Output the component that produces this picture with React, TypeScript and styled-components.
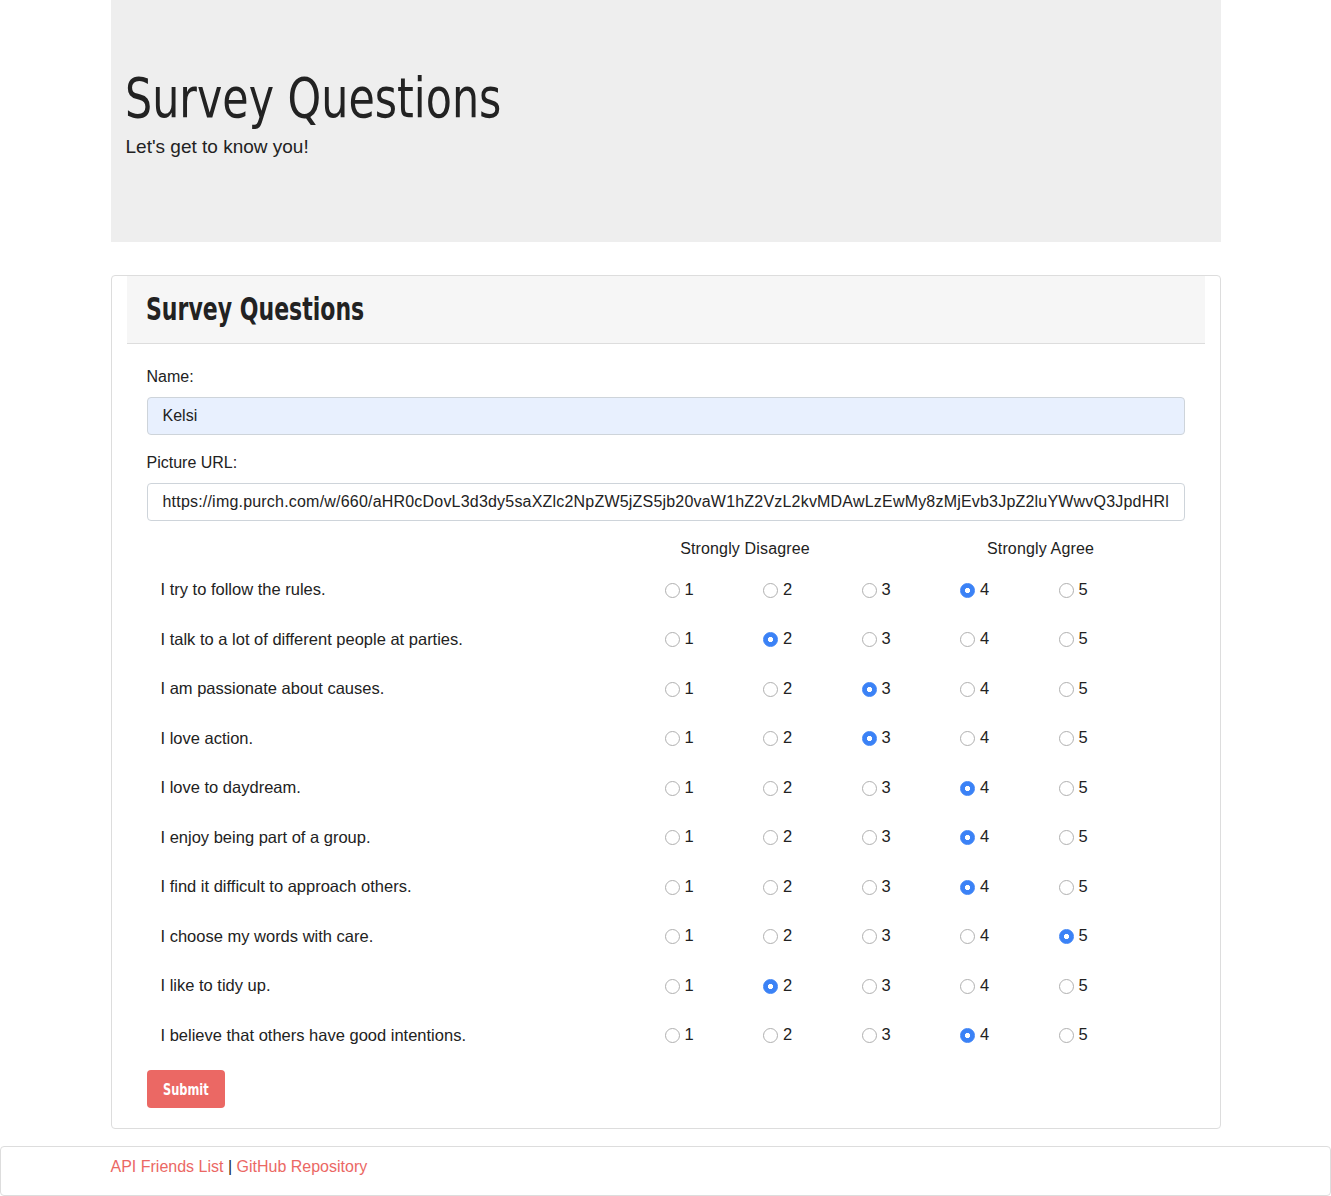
import styled, { createGlobalStyle } from 'styled-components';

const headFont = '"DejaVu Sans Condensed", "Liberation Sans", sans-serif';
const bodyFont = '"Liberation Sans", Arial, sans-serif';
const primary = '#eb6864';

const GlobalStyle = createGlobalStyle`
  * { box-sizing: border-box; }
  body {
    margin: 0;
    background: #fff;
    color: #222;
    font-family: ${bodyFont};
    font-size: 16px;
    line-height: 1.5;
  }
`;

const Container = styled.div`
  width: 1110px;
  margin: 0 auto;
`;

const Jumbotron = styled.header`
  height: 242px;
  background-color: #eeeeee;
  padding: 64px 14px 0;
`;

/* the theme uses a narrow heading face; squeeze the condensed one to fit */
const Narrow = styled.span<{ $scale: number; $origin?: string }>`
  display: inline-block;
  transform: scaleX(${({ $scale }) => $scale});
  transform-origin: ${({ $origin }) => $origin || 'left'} center;
  white-space: nowrap;
`;

const Display = styled.h1`
  margin: 0;
  font-family: ${headFont};
  font-size: 56px;
  font-weight: 400;
  line-height: 1.2;
  color: #222;
`;

const Lead = styled.p`
  margin: 2px 0 0 1px;
  font-size: 19px;
  font-weight: 300;
  line-height: 28px;
`;

const Card = styled.section`
  margin-top: 33px;
  border: 1px solid #dddddd;
  border-radius: 4px;
  padding: 0 15px 20px;
`;

const CardHeader = styled.div`
  background-color: #f6f6f6;
  border-bottom: 1px solid #dddddd;
  padding: 12px 19px 13px;
`;

const CardTitle = styled.h2`
  margin: 0;
  font-family: ${headFont};
  font-size: 32px;
  font-weight: 700;
  line-height: 42px;
  color: #222;
`;

const CardBody = styled.div`
  padding: 21px 20px 0;
`;

const Label = styled.label`
  display: block;
  margin-bottom: 8px;
`;

const Field = styled.input<{ $filled?: boolean }>`
  display: block;
  width: 100%;
  height: 38px;
  padding: 6px 15px;
  margin-bottom: 16px;
  border: 1px solid #ced4da;
  border-radius: 4px;
  background-color: ${({ $filled }) => ($filled ? '#e8f0fe' : '#fff')};
  color: #222;
  font-family: ${bodyFont};
  font-size: 16px;
  letter-spacing: ${({ $filled }) => ($filled ? '0' : '0.2px')};
  outline: none;
`;

const Grid = styled.div`
  display: grid;
  grid-template-columns: 510px repeat(5, 98.5px) 1fr;
  margin-top: 16px;
`;

const ScaleHead = styled.div<{ $col: number }>`
  grid-column: ${({ $col }) => $col} / span 2;
  height: 28px;
  line-height: 24px;
  text-align: center;
  padding-right: 20px;
  letter-spacing: 0.15px;
`;

const Question = styled.div`
  grid-column: 1;
  height: 49.5px;
  display: flex;
  align-items: center;
  padding-left: 14px;
  font-size: 16.5px;
`;

const Choice = styled.label`
  height: 49.5px;
  display: flex;
  align-items: center;
  padding-left: 8px;
  padding-bottom: 1px;
  font-size: 16.5px;
`;

const Radio = styled.input`
  appearance: none;
  flex: none;
  width: 15px;
  height: 15px;
  margin: 2px 5px 0 0;
  border: 1px solid #b0b0b0;
  border-radius: 50%;
  background: #fff;

  &:checked {
    border-color: #3b82f6;
    background: radial-gradient(circle, #fff 0 2.3px, #3b82f6 2.9px);
  }
`;

const Filler = styled.div`
  grid-column: 7;
`;

const SubmitButton = styled.button`
  display: flex;
  align-items: center;
  justify-content: center;
  width: 78px;
  margin-top: 10px;
  height: 38px;
  padding: 0;
  border: none;
  border-radius: 4px;
  background-color: ${primary};
  color: #fff;
  font-family: ${headFont};
  font-size: 16px;
  font-weight: 700;
`;

const Footer = styled.footer`
  margin-top: 17px;
  border: 1px solid #dddddd;
  border-radius: 4px;
  padding: 8px 0 16px;
`;

const Link = styled.a`
  color: ${primary};
  text-decoration: none;
`;

const questions: [string, number][] = [
  ['I try to follow the rules.', 4],
  ['I talk to a lot of different people at parties.', 2],
  ['I am passionate about causes.', 3],
  ['I love action.', 3],
  ['I love to daydream.', 4],
  ['I enjoy being part of a group.', 4],
  ['I find it difficult to approach others.', 4],
  ['I choose my words with care.', 5],
  ['I like to tidy up.', 2],
  ['I believe that others have good intentions.', 4],
];

export default function App() {
  return (
    <>
      <GlobalStyle />
      <Container>
        <Jumbotron>
          <Display>
            <Narrow $scale={0.85}>Survey Questions</Narrow>
          </Display>
          <Lead>Let's get to know you!</Lead>
        </Jumbotron>

        <Card>
          <CardHeader>
            <CardTitle>
              <Narrow $scale={0.765}>Survey Questions</Narrow>
            </CardTitle>
          </CardHeader>
          <CardBody>
            <Label htmlFor="name">Name:</Label>
            <Field id="name" $filled defaultValue="Kelsi" />
            <Label htmlFor="photo">Picture URL:</Label>
            <Field
              id="photo"
              defaultValue="https://img.purch.com/w/660/aHR0cDovL3d3dy5saXZlc2NpZW5jZS5jb20vaW1hZ2VzL2kvMDAwLzEwMy8zMjEvb3JpZ2luYWwvQ3JpdHRlcnMtY2FtZXJhLmpwZw=="
            />

            <Grid>
              <ScaleHead $col={2}>Strongly Disagree</ScaleHead>
              <ScaleHead $col={5}>Strongly Agree</ScaleHead>
              {questions.map(([text, answer], q) => (
                <>
                  <Question key={'q' + q}>{text}</Question>
                  {[1, 2, 3, 4, 5].map((n) => (
                    <Choice key={q + '-' + n}>
                      <Radio type="radio" name={'q' + q} defaultChecked={n === answer} />
                      {n}
                    </Choice>
                  ))}
                  <Filler />
                </>
              ))}
            </Grid>

            <SubmitButton>
              <Narrow $scale={0.79} $origin="center">Submit</Narrow>
            </SubmitButton>
          </CardBody>
        </Card>
      </Container>

      <Footer>
        <Container>
          <Link href="#">API Friends List</Link> | <Link href="#">GitHub Repository</Link>
        </Container>
      </Footer>
    </>
  );
}
